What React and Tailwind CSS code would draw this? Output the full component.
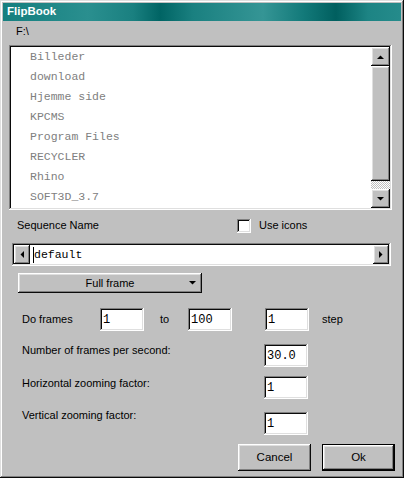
import React from "react";

const raised =
  "shadow-[inset_-1px_-1px_#0a0a0a,inset_1px_1px_#ffffff,inset_-2px_-2px_#808080,inset_2px_2px_#dfdfdf]";
const sunken =
  "shadow-[inset_-1px_-1px_#ffffff,inset_1px_1px_#808080,inset_-2px_-2px_#dfdfdf,inset_2px_2px_#0a0a0a]";

function Tri({ dir }) {
  const pts = {
    up: "0,4 7,4 3.5,0.5",
    down: "0,0 7,0 3.5,3.5",
    left: "4,0 4,7 0.5,3.5",
    right: "0,0 0,7 3.5,3.5",
  }[dir];
  const w = dir === "up" || dir === "down" ? 7 : 4;
  const h = dir === "up" || dir === "down" ? 4 : 7;
  return (
    <svg width={w} height={h} viewBox={`0 0 ${w} ${h}`} className="block">
      <polygon points={pts} fill="#000" />
    </svg>
  );
}

function Box({ value }) {
  return (
    <div
      className={`w-[44px] h-[23px] bg-white ${sunken} pl-[3px] flex items-center font-['Liberation_Mono',monospace] text-[12px] leading-none pt-[1px]`}
    >
      {value}
    </div>
  );
}

const items = [
  "Billeder",
  "download",
  "Hjemme side",
  "KPCMS",
  "Program Files",
  "RECYCLER",
  "Rhino",
  "SOFT3D_3.7",
];

export default function App() {
  return (
    <div
      className={`w-[404px] h-[478px] bg-[#c0c0c0] p-[3px] flex flex-col text-black text-[11px] font-['Liberation_Sans',Arial,sans-serif] shadow-[inset_-1px_-1px_#0a0a0a,inset_1px_1px_#dfdfdf,inset_-2px_-2px_#808080,inset_2px_2px_#ffffff]`}
    >
      {/* Title bar */}
      <div className="h-[18px] flex items-center pl-[4px] text-white font-bold text-[11.5px] bg-[linear-gradient(90deg,#167f7f_0px,#1e8686_40px,#2a8f8f_85px,#1a8080_130px,#006464_157px,#1a8080_190px,#359595_260px,#137a7a_300px,#005f5f_333px,#1d8484_365px,#258b8b_397px)]">
        FlipBook
      </div>

      {/* Path */}
      <div className="h-[20px] flex items-center pl-[13px] pt-[1px]">F:\</div>

      {/* List box */}
      <div className={`mt-[4px] ml-[6px] w-[383px] h-[165px] bg-white p-[2px] ${sunken} flex`}>
        <div className="flex-1 font-['Liberation_Mono',monospace] text-[11.5px] text-[#808080]">
          {items.map((it) => (
            <div key={it} className="h-[20px] leading-[20px] pl-[19px] whitespace-pre">
              {it}
            </div>
          ))}
        </div>
        <div className="w-[19px] flex flex-col bg-[#c0c0c0]">
          <div className={`h-[19px] ${raised} flex items-center justify-center`}>
            <Tri dir="up" />
          </div>
          <div className={`h-[115px] ${raised}`}></div>
          <div className="flex-1 bg-[repeating-conic-gradient(#ffffff_0_25%,#c0c0c0_0_50%)] bg-[length:2px_2px]"></div>
          <div className={`h-[19px] ${raised} flex items-center justify-center`}>
            <Tri dir="down" />
          </div>
        </div>
      </div>

      {/* Sequence name row */}
      <div className="mt-[8px] h-[15px] flex items-center">
        <div className="pl-[14px] w-[234px]">Sequence Name</div>
        <div className={`w-[14px] h-[14px] bg-white ${sunken}`}></div>
        <div className="ml-[8px]">Use icons</div>
      </div>

      {/* Text field with arrows */}
      <div className={`mt-[10px] ml-[9px] w-[379px] h-[23px] bg-white p-[2px] ${sunken} flex`}>
        <div className={`w-[16px] h-[19px] bg-[#c0c0c0] ${raised} flex items-center justify-center`}>
          <Tri dir="left" />
        </div>
        <div className="flex-1 flex items-center pl-[3px]">
          <div className="w-[1px] h-[16px] bg-black"></div>
          <span className="font-['Liberation_Mono',monospace] text-[11.5px]">default</span>
        </div>
        <div className={`w-[16px] h-[19px] bg-[#c0c0c0] ${raised} flex items-center justify-center`}>
          <Tri dir="right" />
        </div>
      </div>

      {/* Dropdown button */}
      <div className={`mt-[7px] ml-[15px] w-[184px] h-[20px] ${raised} flex items-center`}>
        <div className="w-[16px]"></div>
        <div className="flex-1 text-center">Full frame</div>
        <div className="w-[16px] flex justify-center pr-[3px]">
          <Tri dir="down" />
        </div>
      </div>

      {/* Do frames row */}
      <div className="mt-[15px] h-[23px] flex items-center">
        <div className="pl-[19px] w-[97px]">Do frames</div>
        <Box value="1" />
        <div className="w-[44px] pl-[16px]">to</div>
        <Box value="100" />
        <div className="w-[33px]"></div>
        <Box value="1" />
        <div className="ml-[13px]">step</div>
      </div>

      {/* FPS */}
      <div className="mt-[13px] flex items-start">
        <div className="pl-[19px] w-[261px] leading-[13px]">Number of frames per second:</div>
        <Box value="30.0" />
      </div>

      {/* Horizontal */}
      <div className="mt-[9px] flex items-start">
        <div className="pl-[19px] w-[261px] leading-[13px] pt-[1px]">Horizontal zooming factor:</div>
        <Box value="1" />
      </div>

      {/* Vertical */}
      <div className="mt-[13px] flex items-start">
        <div className="pl-[19px] w-[261px] leading-[13px] -mt-[3px]">Vertical zooming factor:</div>
        <Box value="1" />
      </div>

      {/* Buttons */}
      <div className="mt-[9px] flex justify-end gap-[11px] pr-[6px]">
        <div className={`w-[73px] h-[27px] ${raised} flex items-center justify-center text-[11.5px]`}>
          Cancel
        </div>
        <div
          className={`w-[73px] h-[27px] border border-black ${raised} flex items-center justify-center text-[11.5px]`}
        >
          Ok
        </div>
      </div>
    </div>
  );
}
